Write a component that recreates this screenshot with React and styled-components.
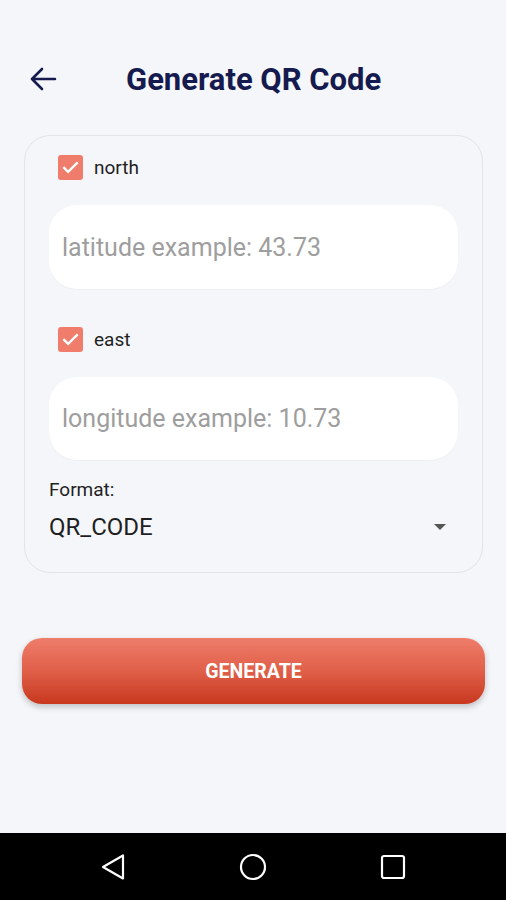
import React from 'react';
import styled, { createGlobalStyle } from 'styled-components';

const colors = {
  page: '#f5f6fa',
  navy: '#151a4f',
  coral: '#f07c6b',
  border: '#e3e4ea',
  placeholder: '#9e9e9e',
  text: '#1f1f1f',
};

const GlobalStyle = createGlobalStyle`
  body {
    margin: 0;
    background: ${colors.page};
    font-family: Roboto, "Noto Sans", sans-serif;
  }
`;

const Screen = styled.div`
  width: 506px;
  height: 900px;
  display: flex;
  flex-direction: column;
  background: ${colors.page};
  overflow: hidden;
`;

const Header = styled.div`
  display: flex;
  align-items: center;
  height: 60px;
  margin-top: 49px;
  padding: 0 29px;
`;

const BackButton = styled.div`
  width: 28px;
  height: 24px;
  display: flex;
  color: ${colors.navy};
`;

const Title = styled.h1`
  margin: 0 0 0 69px;
  font-size: 31px;
  font-weight: 700;
  color: ${colors.navy};
`;

const Card = styled.div`
  margin: 26px 23px 0 24px;
  border: 1px solid ${colors.border};
  border-radius: 26px;
  padding: 19px 24px 31px 24px;
  display: flex;
  flex-direction: column;
`;

const CheckRow = styled.label`
  display: flex;
  align-items: center;
  gap: 11px;
  margin-left: 9px;
  margin-top: ${p => p.top || 0}px;
  height: 25px;
  font-size: 19px;
  color: ${colors.text};
`;

const Box = styled.span`
  width: 25px;
  height: 25px;
  border-radius: 3px;
  background: ${colors.coral};
  display: flex;
  align-items: center;
  justify-content: center;
`;

const Field = styled.div`
  margin-top: 25px;
  height: ${p => p.h}px;
  background: #fff;
  border-radius: 28px;
  display: flex;
  align-items: center;
  padding: 0 13px;
  font-size: 25px;
  color: ${colors.placeholder};
  box-shadow: 0 1px 1px rgba(0, 0, 0, 0.03);
`;

const FormatLabel = styled.div`
  margin-top: 19px;
  font-size: 19px;
  line-height: 22px;
  color: ${colors.text};
`;

const Select = styled.div`
  margin-top: 12px;
  display: flex;
  align-items: center;
  justify-content: space-between;
  font-size: 24px;
  line-height: 28px;
  color: ${colors.text};
  padding-right: 12px;
`;

const Caret = styled.span`
  width: 0;
  height: 0;
  border-left: 6px solid transparent;
  border-right: 6px solid transparent;
  border-top: 6px solid #555;
`;

const GenerateButton = styled.button`
  margin: 65px 21px 0 22px;
  height: 66px;
  border: none;
  border-radius: 20px;
  background: linear-gradient(180deg, #ee7d6b 0%, #e05f48 50%, #c8381f 100%);
  box-shadow: 0 3px 6px rgba(0, 0, 0, 0.22);
  color: #fff;
  font-family: Roboto, sans-serif;
  font-weight: 700;
  font-size: 19.5px;
`;

const Spacer = styled.div`
  flex: 1;
`;

const NavBar = styled.div`
  height: 67px;
  background: #000;
  display: flex;
  align-items: center;
  justify-content: center;
  gap: 113px;
`;

const Check = () => (
  <svg width="19" height="19" viewBox="0 0 24 24" fill="none" stroke="#fff" strokeWidth="3" strokeLinecap="square">
    <path d="M4 12.5l5 5L20 6.5" />
  </svg>
);

export default function App() {
  return (
    <Screen>
      <GlobalStyle />
      <Header>
        <BackButton>
          <svg width="28" height="24" viewBox="0 0 28 24" fill="none" stroke={colors.navy} strokeWidth="2.6" strokeLinecap="round" strokeLinejoin="round">
            <path d="M26 12H3M13 2L3 12l10 10" />
          </svg>
        </BackButton>
        <Title>Generate QR Code</Title>
      </Header>

      <Card>
        <CheckRow>
          <Box><Check /></Box>
          north
        </CheckRow>
        <Field h={84}>latitude example: 43.73</Field>
        <CheckRow top={38}>
          <Box><Check /></Box>
          east
        </CheckRow>
        <Field h={83}>longitude example: 10.73</Field>
        <FormatLabel>Format:</FormatLabel>
        <Select>
          QR_CODE
          <Caret />
        </Select>
      </Card>

      <GenerateButton>GENERATE</GenerateButton>

      <Spacer />
      <NavBar>
        <svg width="26" height="28" viewBox="0 0 26 28" fill="none" stroke="#fff" strokeWidth="2.2" strokeLinejoin="round">
          <path d="M23 2.5v23L3 14z" />
        </svg>
        <svg width="28" height="28" viewBox="0 0 28 28" fill="none" stroke="#fff" strokeWidth="2.2">
          <circle cx="14" cy="14" r="12" />
        </svg>
        <svg width="26" height="26" viewBox="0 0 26 26" fill="none" stroke="#fff" strokeWidth="2.2">
          <rect x="2" y="2" width="22" height="22" rx="2" />
        </svg>
      </NavBar>
    </Screen>
  );
}
